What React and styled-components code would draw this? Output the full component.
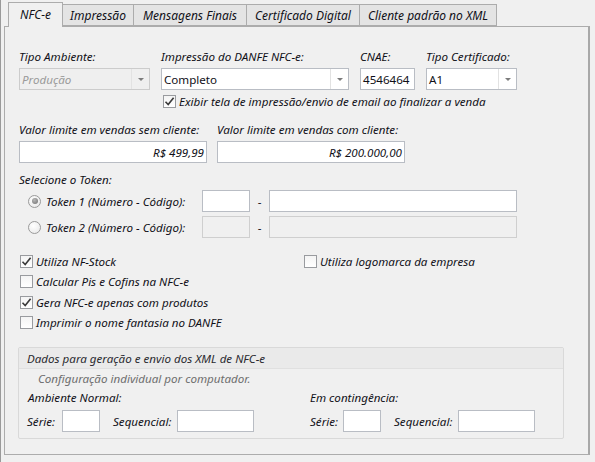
import React from 'react'
import styled, { createGlobalStyle } from 'styled-components'

const GlobalStyle = createGlobalStyle`
  html, body {
    margin: 0;
    padding: 0;
    background: #f0f0f0;
  }
  body {
    font-family: "Noto Sans", "Open Sans", sans-serif;
    font-size: 11.6px;
    color: #101018;
  }
`

const Window = styled.div`
  width: 595px;
  height: 462px;
  box-sizing: border-box;
  padding: 2px 0 0 3px;
  border-left: 1px solid #9a9a9a;
  position: relative;
  overflow: hidden;
`

const TabBar = styled.div`
  display: flex;
  align-items: flex-end;
  height: 24px;
  padding-left: 4px;
  position: relative;
  z-index: 1;
`

const Tab = styled.div`
  box-sizing: border-box;
  width: ${p => p.$w}px;
  height: ${p => (p.$active ? 25 : 22)}px;
  margin-bottom: ${p => (p.$active ? -1 : 0)}px;
  margin-left: -1px;
  border: 1px solid #acacac;
  border-bottom: ${p => (p.$active ? 'none' : '1px solid #acacac')};
  background: ${p => (p.$active ? '#f0f0f0' : '#e4e4e4')};
  font-style: italic;
  font-size: 12px;
  white-space: nowrap;
  display: flex;
  justify-content: center;
  padding-top: ${p => (p.$active ? 3 : 2)}px;
  z-index: ${p => (p.$active ? 2 : 1)};
  &:first-child {
    margin-left: 0;
  }
`

const Panel = styled.div`
  box-sizing: border-box;
  width: 586px;
  height: 429px;
  border: 1px solid #acacac;
  border-right: 2px solid #a8a8a8;
  background: #f0f0f0;
  padding: 23px 0 0 14px;
  font-style: italic;
`

const Row = styled.div`
  display: flex;
  gap: ${p => p.$gap || 11}px;
  margin-top: ${p => p.$top || 0}px;
  margin-left: ${p => p.$left || 0}px;
`

const Field = styled.div`
  display: flex;
  flex-direction: column;
  gap: 4px;
  width: ${p => p.$w}px;
`

const Label = styled.div`
  line-height: 14px;
  height: 14px;
  white-space: nowrap;
  margin-top: ${p => p.$top || 0}px;
  margin-left: ${p => p.$left || 0}px;
  color: ${p => p.$muted ? '#6e6e6e' : 'inherit'};
`

const Input = styled.div`
  box-sizing: border-box;
  height: 22px;
  width: ${p => (p.$w ? `${p.$w}px` : '100%')};
  border: 1px solid ${p => (p.$disabled ? '#cfcfcf' : '#b9bdc4')};
  background: ${p => (p.$disabled ? '#f0f0f0' : '#fff')};
  display: flex;
  align-items: center;
  justify-content: ${p => (p.$right ? 'flex-end' : 'flex-start')};
  padding: 0 2px;
  font-style: ${p => (p.$italic ? 'italic' : 'normal')};
  white-space: nowrap;
  flex-shrink: 0;
`

const Combo = styled.div`
  box-sizing: border-box;
  height: 22px;
  border: 1px solid ${p => (p.$disabled ? '#cccccc' : '#b9bdc4')};
  background: ${p => (p.$disabled ? '#efefef' : '#fff')};
  color: ${p => (p.$disabled ? '#9a9a9a' : 'inherit')};
  display: flex;
  font-style: ${p => (p.$disabled ? 'italic' : 'normal')};
`

const ComboText = styled.div`
  flex: 1;
  display: flex;
  align-items: center;
  padding-left: 2px;
`

const ComboButton = styled.div`
  width: 17px;
  border-left: 1px solid #e2e2e2;
  display: flex;
  align-items: center;
  justify-content: center;
  &::after {
    content: '';
    border-left: 3.5px solid transparent;
    border-right: 3.5px solid transparent;
    border-top: 3.5px solid #7c7c7c;
  }
`

const Check = styled.label`
  display: flex;
  align-items: center;
  gap: 3px;
  height: ${p => p.$h || 20.5}px;
  white-space: nowrap;
  width: ${p => (p.$w ? `${p.$w}px` : 'auto')};
  overflow: hidden;
`

const Box = styled.span`
  box-sizing: border-box;
  width: 13px;
  height: 13px;
  flex-shrink: 0;
  border: 1px solid #999b9f;
  background: linear-gradient(#f4f4f4, #ffffff);
  display: flex;
  align-items: center;
  justify-content: center;
`

const Radio = styled.span`
  box-sizing: border-box;
  width: 13px;
  height: 13px;
  border-radius: 50%;
  border: 1px solid #9a9a9a;
  background: radial-gradient(circle at 40% 35%, #ffffff, #e6e6e6);
  display: flex;
  align-items: center;
  justify-content: center;
  flex-shrink: 0;
  &::after {
    content: '';
    display: ${p => (p.$on ? 'block' : 'none')};
    width: 6px;
    height: 6px;
    border-radius: 50%;
    background: radial-gradient(circle at 40% 35%, #b8b8b8, #6f6f6f);
  }
`

const TokenRow = styled.div`
  display: flex;
  align-items: center;
  height: 22px;
  margin-top: ${p => p.$top || 0}px;
  margin-left: 9px;
`

const TokenLabel = styled.div`
  width: 174px;
  display: flex;
  align-items: center;
  gap: 5px;
  white-space: nowrap;
`

const Dash = styled.div`
  width: 19px;
  text-align: center;
  font-style: normal;
`

const Columns = styled.div`
  display: flex;
  margin-top: ${p => p.$top || 0}px;
  margin-left: 1px;
`

const Column = styled.div`
  display: flex;
  flex-direction: column;
  width: ${p => (p.$w ? `${p.$w}px` : 'auto')};
`

const Group = styled.div`
  box-sizing: border-box;
  width: 546px;
  height: 92px;
  margin: 14px 0 0 -1px;
  border: 1px solid #d9d9d9;
  border-radius: 2px;
`

const GroupHeader = styled.div`
  height: 21px;
  box-sizing: border-box;
  border-bottom: 1px solid #e0e0e0;
  background: #eaeaea;
  padding-left: 8px;
  display: flex;
  align-items: center;
  color: #2a2a30;
`

const GroupBody = styled.div`
  display: flex;
  padding-left: 8px;
`

const SubColumn = styled.div`
  display: flex;
  flex-direction: column;
  width: ${p => p.$w}px;
`

const SerieRow = styled.div`
  display: flex;
  align-items: center;
  margin-top: 5px;
`

const InlineLabel = styled.span`
  width: ${p => p.$w}px;
  white-space: nowrap;
  flex-shrink: 0;
`

const Spacer = styled.span`
  width: ${p => p.$w}px;
  flex-shrink: 0;
`

const Tick = () => (
  <svg width="11" height="11" viewBox="0 0 11 11">
    <path d="M1.5 5.8 L4.2 8.6 L9.6 1.8" fill="none" stroke="#3a3a3a" strokeWidth="1.6" />
  </svg>
)

const CheckItem = ({ on, children, ...rest }) => (
  <Check {...rest}>
    <Box>{on && <Tick />}</Box>
    <span>{children}</span>
  </Check>
)

const tabs = [
  { name: 'NFC-e', w: 55, active: true },
  { name: 'Impressão', w: 72 },
  { name: 'Mensagens Finais', w: 114 },
  { name: 'Certificado Digital', w: 114 },
  { name: 'Cliente padrão no XML', w: 138 }
]

const SerieFields = ({ serieW }) => (
  <SerieRow>
    <InlineLabel $w={serieW}>Série:</InlineLabel>
    <Input $w={38} />
    <Spacer $w={13} />
    <InlineLabel $w={64}>Sequencial:</InlineLabel>
    <Input $w={77} />
  </SerieRow>
)

export default function App() {
  return (
    <>
      <GlobalStyle />
      <Window>
        <TabBar>
          {tabs.map(t => (
            <Tab key={t.name} $w={t.w} $active={t.active}>
              {t.name}
            </Tab>
          ))}
        </TabBar>
        <Panel>
          <Row>
            <Field $w={131}>
              <Label>Tipo Ambiente:</Label>
              <Combo $disabled>
                <ComboText>Produção</ComboText>
                <ComboButton />
              </Combo>
            </Field>
            <Field $w={188}>
              <Label>Impressão do DANFE NFC-e:</Label>
              <Combo>
                <ComboText>Completo</ComboText>
                <ComboButton />
              </Combo>
            </Field>
            <Field $w={55}>
              <Label>CNAE:</Label>
              <Input>4546464</Input>
            </Field>
            <Field $w={91}>
              <Label>Tipo Certificado:</Label>
              <Combo>
                <ComboText>A1</ComboText>
                <ComboButton />
              </Combo>
            </Field>
          </Row>

          <Row $top={5} $left={144}>
            <CheckItem on $h={13} $w={326}>
              Exibir tela de impressão/envio de email ao finalizar a venda
            </CheckItem>
          </Row>

          <Row $top={15} $gap={10}>
            <Field $w={188}>
              <Label>Valor limite em vendas sem cliente:</Label>
              <Input $right $italic>R$ 499,99</Input>
            </Field>
            <Field $w={188}>
              <Label>Valor limite em vendas com cliente:</Label>
              <Input $right $italic>R$ 200.000,00</Input>
            </Field>
          </Row>

          <Label $top={10}>Selecione o Token:</Label>
          <TokenRow $top={3}>
            <TokenLabel>
              <Radio $on />
              <span>Token 1 (Número - Código):</span>
            </TokenLabel>
            <Input $w={48} />
            <Dash>-</Dash>
            <Input $w={248} />
          </TokenRow>
          <TokenRow $top={4}>
            <TokenLabel>
              <Radio />
              <span>Token 2 (Número - Código):</span>
            </TokenLabel>
            <Input $w={48} $disabled />
            <Dash>-</Dash>
            <Input $w={248} $disabled />
          </TokenRow>

          <Columns $top={13}>
            <Column $w={284}>
              <CheckItem on>Utiliza NF-Stock</CheckItem>
              <CheckItem>Calcular Pis e Cofins na NFC-e</CheckItem>
              <CheckItem on>Gera NFC-e apenas com produtos</CheckItem>
              <CheckItem>Imprimir o nome fantasia no DANFE</CheckItem>
            </Column>
            <Column>
              <CheckItem>Utiliza logomarca da empresa</CheckItem>
            </Column>
          </Columns>

          <Group>
            <GroupHeader>Dados para geração e envio dos XML de NFC-e</GroupHeader>
            <Label $top={3} $left={19} $muted>Configuração individual por computador.</Label>
            <GroupBody>
              <SubColumn $w={283}>
                <Label $top={5} $left={1}>Ambiente Normal:</Label>
                <SerieFields serieW={35} />
              </SubColumn>
              <SubColumn $w={250}>
                <Label $top={5}>Em contingência:</Label>
                <SerieFields serieW={33} />
              </SubColumn>
            </GroupBody>
          </Group>
        </Panel>
      </Window>
    </>
  )
}
